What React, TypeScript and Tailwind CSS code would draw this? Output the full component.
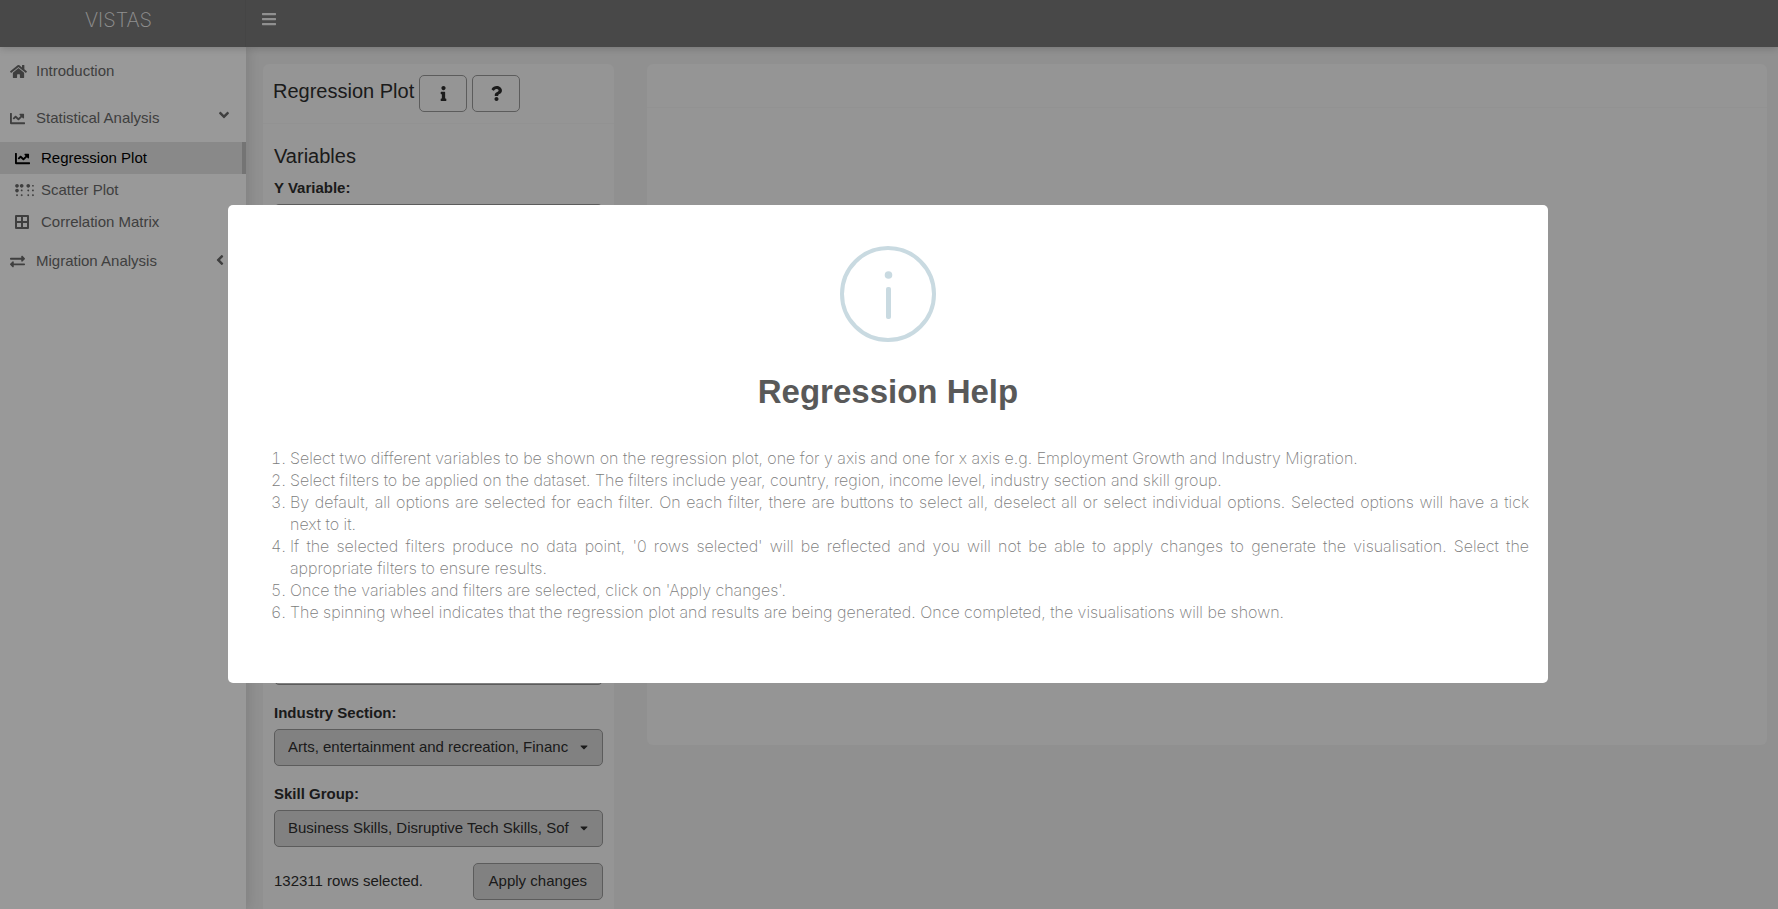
import type { ReactNode } from "react";
import {
  FaAngleDown,
  FaAngleLeft,
  FaBars,
  FaBorderAll,
  FaBraille,
  FaCaretDown,
  FaChartLine,
  FaExchangeAlt,
  FaHome,
  FaInfo,
  FaQuestion,
} from "react-icons/fa";

const helpItems = [
  "Select two different variables to be shown on the regression plot, one for y axis and one for x axis e.g. Employment Growth and Industry Migration.",
  "Select filters to be applied on the dataset. The filters include year, country, region, income level, industry section and skill group.",
  "By default, all options are selected for each filter. On each filter, there are buttons to select all, deselect all or select individual options. Selected options will have a tick next to it.",
  "If the selected filters produce no data point, '0 rows selected' will be reflected and you will not be able to apply changes to generate the visualisation. Select the appropriate filters to ensure results.",
  "Once the variables and filters are selected, click on 'Apply changes'.",
  "The spinning wheel indicates that the regression plot and results are being generated. Once completed, the visualisations will be shown.",
];

function NavItem({ icon, label, arrow }: { icon: ReactNode; label: string; arrow?: ReactNode }) {
  return (
    <a href="#" className="flex h-[47px] items-center pr-4 pl-[10px] text-[#6a6a6a]">
      <span className="flex w-[26px]">{icon}</span>
      <span className="flex-1">{label}</span>
      {arrow}
    </a>
  );
}

function SubItem({ icon, label, active = false }: { icon: ReactNode; label: string; active?: boolean }) {
  return (
    <a
      href="#"
      className={
        active
          ? "flex h-8 items-center border-r-4 border-[#c2c2c2] bg-[#e5e5e5] pl-[15px] text-black"
          : "flex h-8 items-center pl-[15px] text-[#6a6a6a]"
      }
    >
      <span className="flex w-[26px] shrink-0">{icon}</span>
      {label}
    </a>
  );
}

function Picker({ id, label, value = "" }: { id: string; label?: string; value?: string }) {
  return (
    <div className="relative flex">
      <select
        id={id}
        aria-label={label}
        className="h-[37px] w-full appearance-none rounded-[5px] border border-[#9a9a9a] bg-[#d8d8d8] pr-[27px] pl-[13px]"
      >
        <option>{value}</option>
      </select>
      <FaCaretDown className="pointer-events-none absolute top-3 right-[13px] h-3 w-3" />
    </div>
  );
}

function Field({ id, label, value }: { id: string; label: string; value?: string }) {
  return (
    <div className="mb-4 flex flex-col">
      <label htmlFor={id} className="mb-1 leading-6 font-bold">
        {label}
      </label>
      <Picker id={id} value={value} />
    </div>
  );
}

export default function App() {
  return (
    <div className="flex h-screen flex-col overflow-hidden bg-[#f0f0f0] font-['Liberation_Sans',Arial,sans-serif] text-[15px] text-[#2e2e2e]">
      <header className="z-10 flex h-[47px] shrink-0 bg-[#787878] text-[#f0f0f0] shadow-[0_1px_8px_rgba(0,0,0,0.2)]">
        <a
          href="#"
          className="flex w-[246px] justify-center border-r border-[#737373] pt-1 pr-2 font-['Inter',sans-serif] text-xl leading-8 font-extralight"
        >
          VISTAS
        </a>
        <button aria-label="Toggle sidebar" className="h-[38px] pl-4">
          <FaBars className="h-4 w-[14px]" />
        </button>
      </header>

      <div className="flex min-h-0 flex-1">
        <nav className="w-[246px] shrink-0 bg-white pt-px shadow-[2px_0_12px_rgba(0,0,0,0.12)]">
          <NavItem icon={<FaHome className="h-[15px] w-[17px]" />} label="Introduction" />
          <NavItem
            icon={<FaChartLine className="h-[15px] w-[15px]" />}
            label="Statistical Analysis"
            arrow={<FaAngleDown className="mb-2 h-4 w-3" />}
          />
          <SubItem active icon={<FaChartLine className="h-[15px] w-[15px]" />} label="Regression Plot" />
          <SubItem icon={<FaBraille className="h-[15px] w-[19px]" />} label="Scatter Plot" />
          <SubItem icon={<FaBorderAll className="h-4 w-[14px]" />} label="Correlation Matrix" />
          <NavItem
            icon={<FaExchangeAlt className="h-[15px] w-[15px]" />}
            label="Migration Analysis"
            arrow={<FaAngleLeft className="mr-1 mb-1 h-4 w-3" />}
          />
        </nav>

        <main className="flex flex-1 items-start gap-[33px] pt-[17px] pr-[11px] pl-[17px]">
          <section className="w-[351px] shrink-0 rounded-md bg-[#f8f8f8]">
            <div className="flex h-[60px] items-start gap-[5px] border-b border-[#f3f3f3] px-[10px] pt-[11px]">
              <h1 className="text-xl leading-8">Regression Plot</h1>
              <button aria-label="Information" className="flex h-[37px] w-12 items-center justify-center rounded-[5px] border border-[#9a9a9a]">
                <FaInfo className="h-[15px] w-[15px]" />
              </button>
              <button aria-label="Help" className="flex h-[37px] w-12 items-center justify-center rounded-[5px] border border-[#9a9a9a]">
                <FaQuestion className="h-[15px] w-[15px]" />
              </button>
            </div>
            <div className="px-[11px] pt-[18px]">
              <h2 className="mb-[6px] text-xl leading-7">Variables</h2>
              <Field id="y-variable" label="Y Variable:" />
              <div className="mt-11 mb-[83px]">
                <Picker id="x-variable" label="X Variable" />
              </div>
              <div className="mb-4 flex flex-col gap-11">
                <Picker id="year" label="Year" />
                <Picker id="country" label="Country" />
                <Picker id="region" label="Region" />
                <Picker id="income" label="Income Level" />
              </div>
              <Field id="industry" label="Industry Section:" value="Arts, entertainment and recreation, Financ" />
              <Field id="skill" label="Skill Group:" value="Business Skills, Disruptive Tech Skills, Sof" />
              <div className="flex items-center justify-between pb-4">
                <span>132311 rows selected.</span>
                <button className="h-[37px] rounded-[5px] border border-[#9a9a9a] bg-[#d8d8d8] px-[15px]">
                  Apply changes
                </button>
              </div>
            </div>
          </section>
          <section className="h-[681px] flex-1 rounded-md bg-[#f8f8f8]">
            <div className="h-11 border-b border-[#f3f3f3]" />
          </section>
        </main>
      </div>

      <div className="fixed inset-0 z-20 flex items-center justify-center bg-black/40 pr-0.5 pb-[21px]">
        <div
          role="dialog"
          aria-modal="true"
          aria-labelledby="help-title"
          className="flex w-full max-w-[1320px] flex-col items-center rounded-[5px] bg-white px-[19px] pt-[41px] pb-[60px]"
        >
          <svg viewBox="0 0 96 96" className="h-24 w-24" fill="none" stroke="#c9dae1" aria-hidden="true">
            <circle cx="48" cy="48" r="46" strokeWidth="4" />
            <circle cx="48.5" cy="29" r="3.8" fill="#c9dae1" stroke="none" />
            <rect x="46" y="41" width="5" height="32" rx="2" fill="#c9dae1" stroke="none" />
          </svg>
          <h2 id="help-title" className="mt-7 text-[33px] leading-11 font-bold text-[#595959]">
            Regression Help
          </h2>
          <ol className="mt-[33px] w-full list-decimal pl-[43px] text-justify font-['Inter',sans-serif] text-base leading-[22px] font-extralight text-[#7c7c7c]">
            {helpItems.map((item) => (
              <li key={item}>{item}</li>
            ))}
          </ol>
        </div>
      </div>
    </div>
  );
}
